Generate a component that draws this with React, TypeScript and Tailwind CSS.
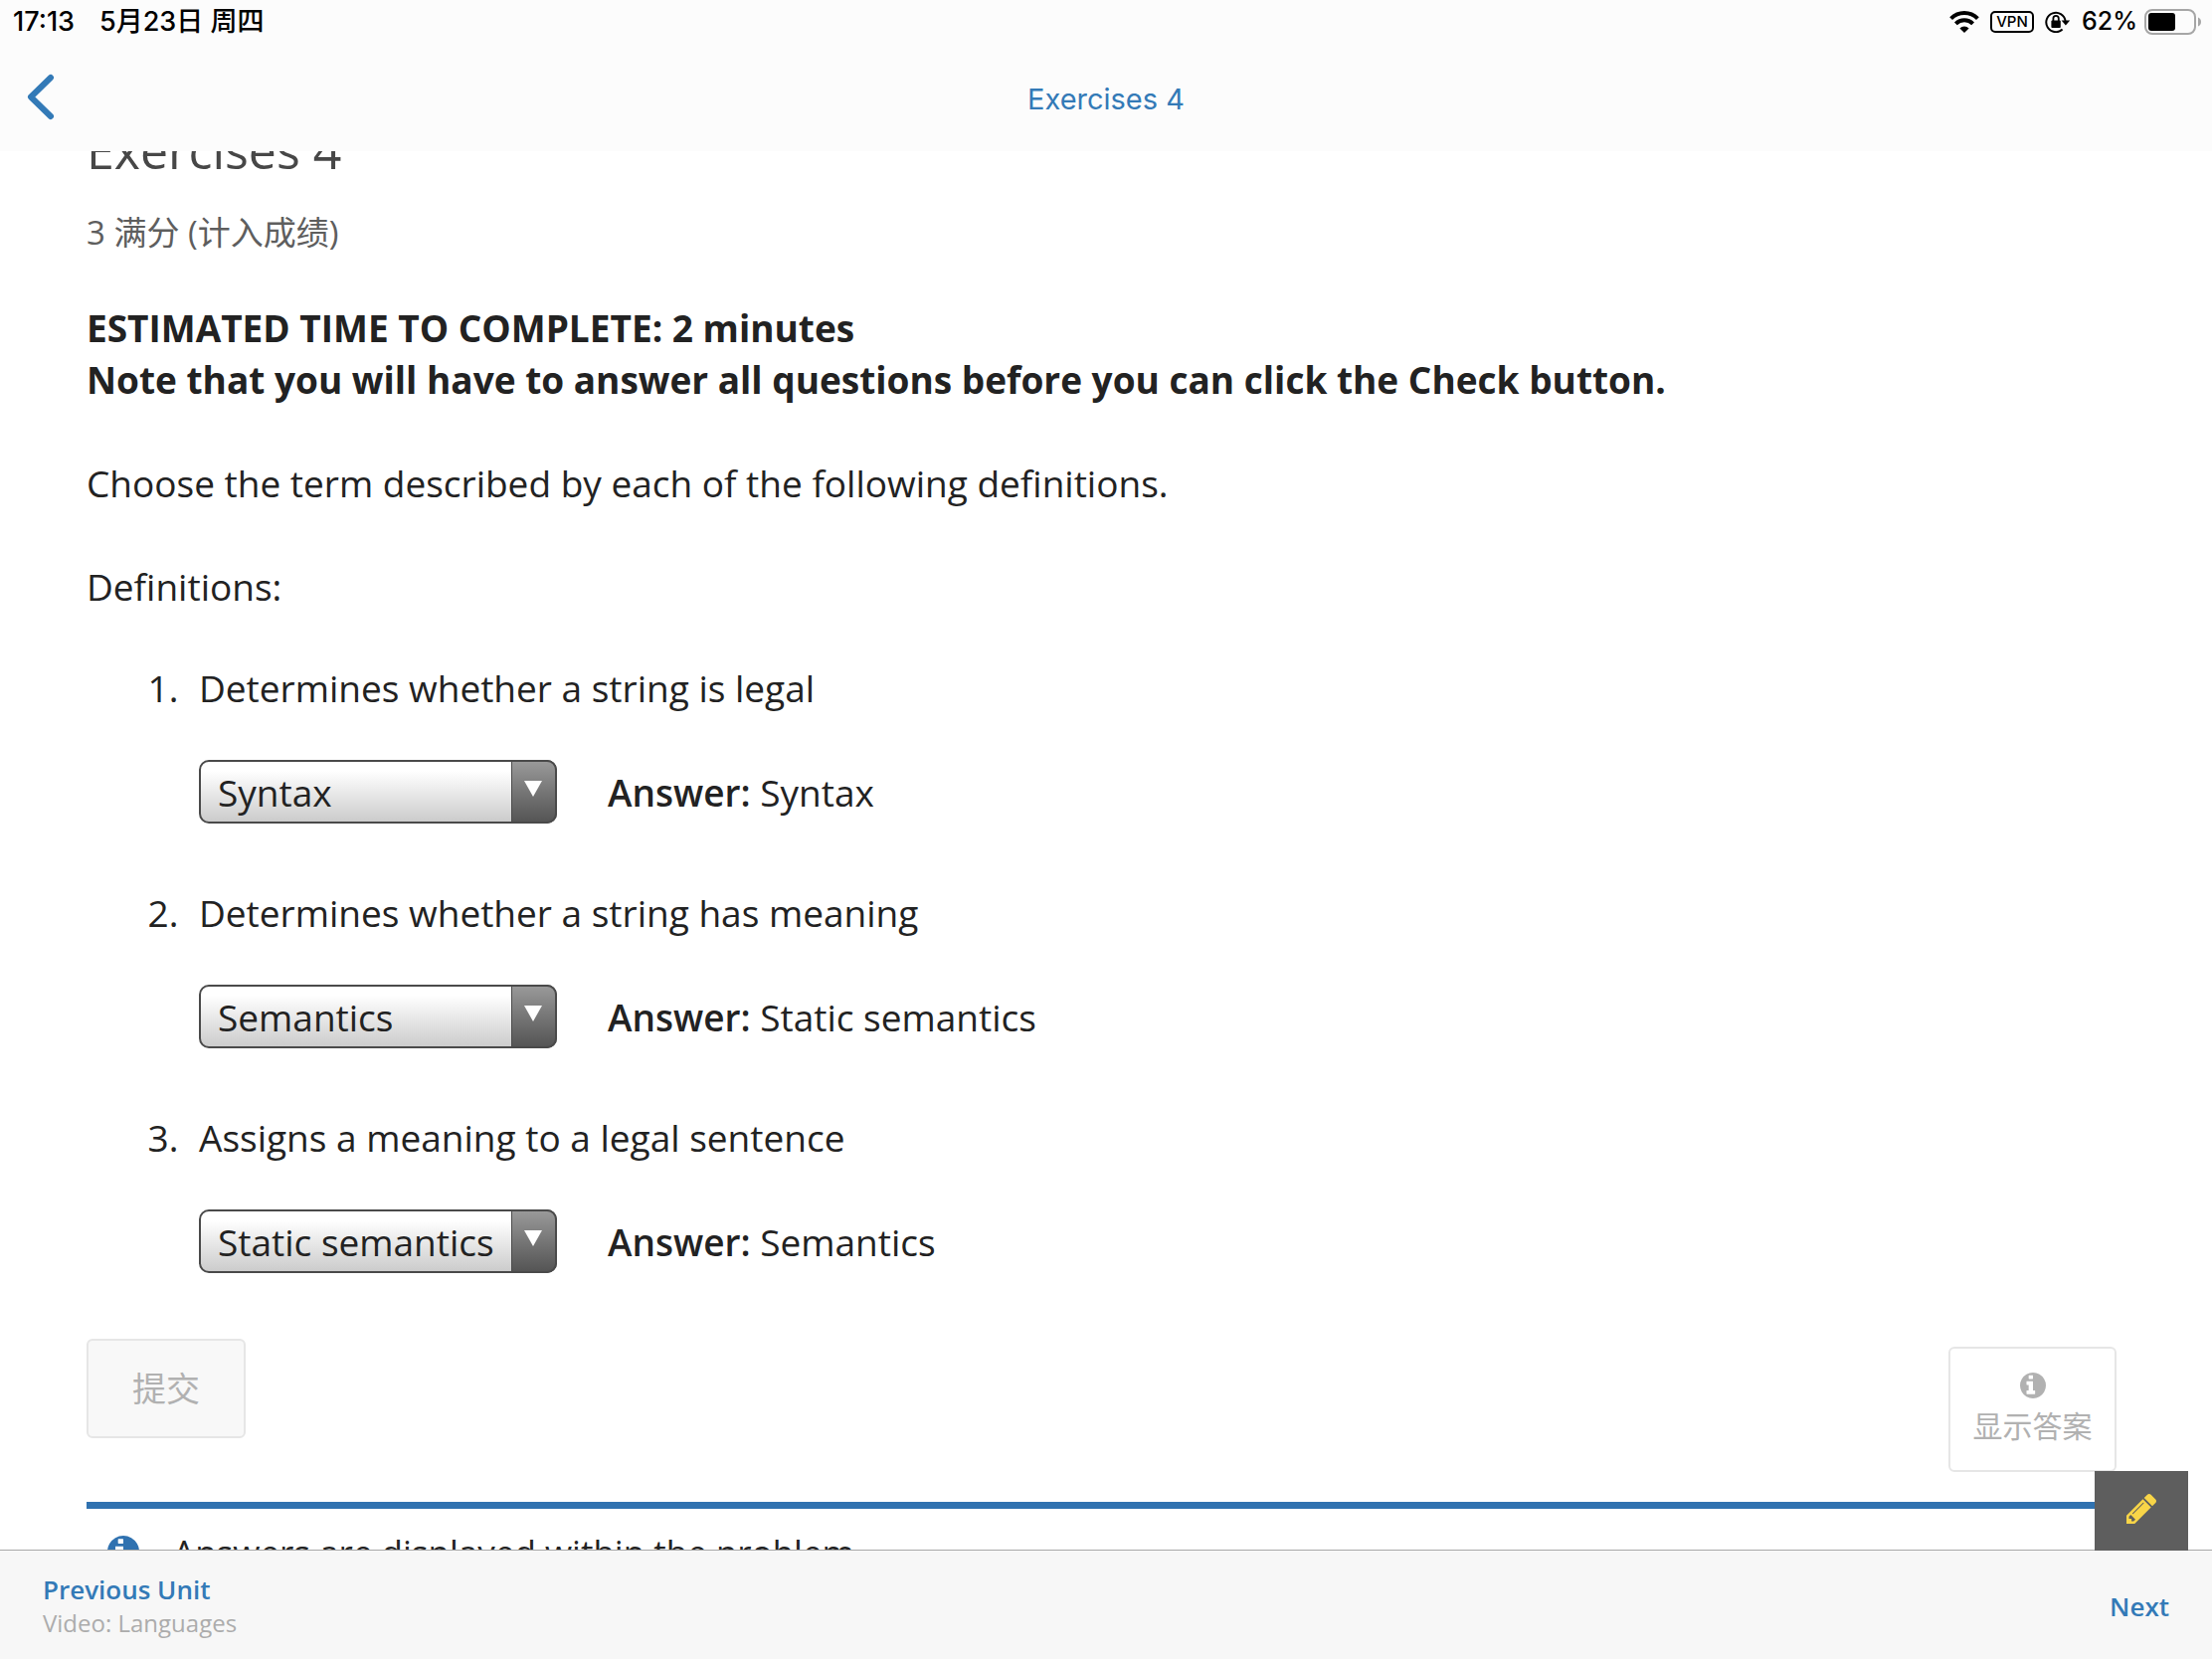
import React from "react";

const INFO =
  "M1024 1376v-160q0-14-9-23t-23-9h-96v-512q0-14-9-23t-23-9h-320q-14 0-23 9t-9 23v160q0 14 9 23t23 9h96v320h-96q-14 0-23 9t-9 23v160q0 14 9 23t23 9h448q14 0 23-9t9-23zM896 480v-160q0-14-9-23t-23-9h-192q-14 0-23 9t-9 23v160q0 14 9 23t23 9h192q14 0 23-9t9-23zM1664 896q0 209-103 385.5t-279.5 279.5-385.5 103-385.5-103-279.5-279.5-103-385.5 103-385.5 279.5-279.5 385.5-103 385.5 103 279.5 279.5 103 385.5z";
const PENCIL =
  "M491 1536l91-91-235-235-91 91v107h128v128h107zM1014 608q0-22-22-22-10 0-17 7l-542 542q-7 7-7 17 0 22 22 22 10 0 17-7l542-542q7-7 7-17zM960 416l416 416-832 832h-416v-416zM1643 512q0 53-37 90l-166 166-416-416 166-165q36-38 90-38 53 0 91 38l235 234q37 39 37 91z";

const OPTIONS = ["Syntax", "Semantics", "Static semantics"];

const QUESTIONS = [
  { text: "Determines whether a string is legal", chosen: "Syntax", answer: "Syntax" },
  { text: "Determines whether a string has meaning", chosen: "Semantics", answer: "Static semantics" },
  { text: "Assigns a meaning to a legal sentence", chosen: "Static semantics", answer: "Semantics" },
];

function InfoIcon({ className }: { className: string }) {
  return (
    <svg viewBox="128 128 1536 1536" className={className} fill="currentColor" aria-hidden="true">
      <path d={INFO} />
    </svg>
  );
}

function StatusBar() {
  return (
    <div className="flex h-[43px] items-center justify-between pl-[13px] pr-[10px] font-['Inter','Noto_Sans_CJK_SC',sans-serif] text-[26px] font-medium leading-[43px] text-black">
      <div className="flex gap-[25px] text-[27px]">
        <span>17:13</span>
        <span>5月23日 周四</span>
      </div>
      <div className="flex items-center">
        <svg viewBox="0 0 30 22" className="mr-[11px] h-[22px] w-[30px]" fill="none" stroke="black" strokeWidth="4" aria-label="Wi-Fi">
          <path d="M1.6 7.600a19 19 0 0 1 26.8 0" />
          <path d="M6.4 12.800a12.2 12.2 0 0 1 17.2 0" />
          <path d="M10.400 17.400a6.600 6.600 0 0 1 9.200 0L15 22z" fill="black" stroke="none" />
        </svg>
        <span className="mr-[11px] flex h-[22px] w-[44px] items-center justify-center rounded-[5px] border-2 border-black text-[15px] font-medium leading-none">
          VPN
        </span>
        <svg viewBox="0 0 26 22" className="mr-[11px] h-[22px] w-[26px]" fill="none" aria-label="Rotation lock">
          <path d="M17.6 18.6A9.7 9.7 0 1 1 20.6 10" stroke="black" strokeWidth="2" />
          <path d="M16.6 9.6h8.6l-4.3 4.8z" fill="black" />
          <rect x="6.4" y="9.6" width="9.4" height="7.4" rx="1" fill="black" />
          <path d="M8.4 10V7.6a2.7 2.7 0 0 1 5.4 0V10" stroke="black" strokeWidth="1.8" />
        </svg>
        <span className="mr-[7px] text-[25px]">62%</span>
        <svg viewBox="0 0 58 26" className="h-[26px] w-[58px]" aria-label="Battery">
          <rect x="1" y="1" width="50" height="24" rx="7" fill="none" stroke="#a6a6a6" strokeWidth="2" />
          <rect x="4" y="4" width="27" height="18" rx="3" fill="black" />
          <path d="M54 8.6q3 1.2 3 4.4t-3 4.4z" fill="#a6a6a6" />
        </svg>
      </div>
    </div>
  );
}

function TermSelect({ id, value }: { id: string; value: string }) {
  return (
    <div className="relative h-[64px] w-[360px]">
      <select
        id={id}
        defaultValue={value}
        className="h-full w-full appearance-none rounded-[10px] border-2 border-[#4a4a4a] bg-linear-to-b from-white from-15% to-[#cccccc] pl-[17px] pr-[46px] pt-[2px] text-[#222222]"
      >
        {OPTIONS.map((o) => (
          <option key={o}>{o}</option>
        ))}
      </select>
      <span className="pointer-events-none absolute inset-y-0 right-0 flex w-[46px] items-center justify-center rounded-r-[10px] border-2 border-l border-[#4a4a4a] bg-linear-to-b from-[#999999] to-[#555555]">
        <svg viewBox="0 0 18 16" className="mb-[6px] mr-[2px] h-[16px] w-[18px]" aria-hidden="true">
          <path d="M0 0h18L9 16z" fill="white" />
        </svg>
      </span>
    </div>
  );
}

export default function App() {
  return (
    <div className="flex h-screen flex-col overflow-hidden bg-white font-['Open_Sans','Noto_Sans_CJK_SC',sans-serif] text-[37px] leading-[52px] text-[#222222]">
      <header className="shrink-0 bg-[#fcfcfc]">
        <StatusBar />
        <div className="grid h-[109px] grid-cols-[1fr_auto_1fr] items-center px-[26px] pt-[5px]">
          <button aria-label="Back" className="flex h-[60px] w-[40px] items-start pt-[3px] text-[#337ab7]">
            <svg viewBox="0 0 30 48" className="h-[48px] w-[30px]" fill="none" stroke="currentColor" strokeWidth="6" strokeLinecap="round" strokeLinejoin="round">
              <path d="M25 5 5 24.500l20 19.500" />
            </svg>
          </button>
          <span className="font-['Inter',sans-serif] text-[29px] leading-[40px] text-[#337ab7]">Exercises 4</span>
        </div>
      </header>

      <main className="min-h-0 flex-1 overflow-hidden px-[87px]">
        <h1 className="-mt-[32px] text-[50px] leading-[62px] text-[#474747]">Exercises 4</h1>
        <p className="mt-[27px] text-[33px] leading-[50px] text-[#5e5e5e]">3 满分 (计入成绩)</p>
        <p className="mt-[45px] font-bold">
          ESTIMATED TIME TO COMPLETE: 2 minutes
          <br />
          Note that you will have to answer all questions before you can click the Check button.
        </p>
        <p className="mt-[52px]">Choose the term described by each of the following definitions.</p>
        <p className="mt-[52px]">Definitions:</p>

        <ol className="mt-[50px] flex list-decimal flex-col gap-[56px] pl-[102px]">
          {QUESTIONS.map((q, i) => (
            <li key={q.text} className="pl-[11px]">
              <label htmlFor={`term-${i}`}>{q.text}</label>
              <div className="mt-[46px] flex items-center gap-[51px] pb-[8px]">
                <TermSelect id={`term-${i}`} value={q.chosen} />
                <p className="pt-[2px]">
                  <b className="font-semibold">Answer:</b> {q.answer}
                </p>
              </div>
            </li>
          ))}
        </ol>

        <div className="mt-[58px] flex items-start justify-between pr-[9px]">
          <button disabled className="h-[100px] w-[160px] rounded-[6px] border-2 border-[#e6e6e6] bg-[#f8f8f8] text-[34px] text-[#b1b1b1]">
            提交
          </button>
          <button disabled className="mt-[8px] flex h-[126px] w-[169px] flex-col items-center rounded-[6px] border-2 border-[#e6e6e6] bg-white pt-[24px] text-[30px] leading-[56px] text-[#b1b1b1]">
            <InfoIcon className="size-[26px] shrink-0" />
            显示答案
          </button>
        </div>

        <div className="mt-[30px] flex items-start gap-[34px] border-t-[7px] border-[#3072b0] pl-[21px] pt-[18px]">
          <InfoIcon className="mt-[9px] size-[32px] shrink-0 text-[#3072b0]" />
          <p className="text-[35px]">Answers are displayed within the problem</p>
        </div>
      </main>

      <footer className="relative flex h-[110px] shrink-0 items-center justify-between border-t border-[#a8a8a8] bg-[#f7f7f7] px-[43px] pt-[2px]">
        <button aria-label="Annotate" className="absolute bottom-full right-[24px] flex h-[80px] w-[94px] items-center justify-center bg-[#5e5e5e] pb-[4px] text-[#f8d548]">
          <svg viewBox="128 149 1515 1515" className="size-[30px]" fill="currentColor">
            <path d={PENCIL} />
          </svg>
        </button>
        <div className="flex flex-col">
          <a href="#previous" className="text-[26px] font-semibold leading-[34px] text-[#337ab7]">Previous Unit</a>
          <span className="text-[24px] leading-[34px] text-[#acacac]">Video: Languages</span>
        </div>
        <a href="#next" className="text-[26px] font-semibold leading-[34px] text-[#337ab7]">Next</a>
      </footer>
    </div>
  );
}
